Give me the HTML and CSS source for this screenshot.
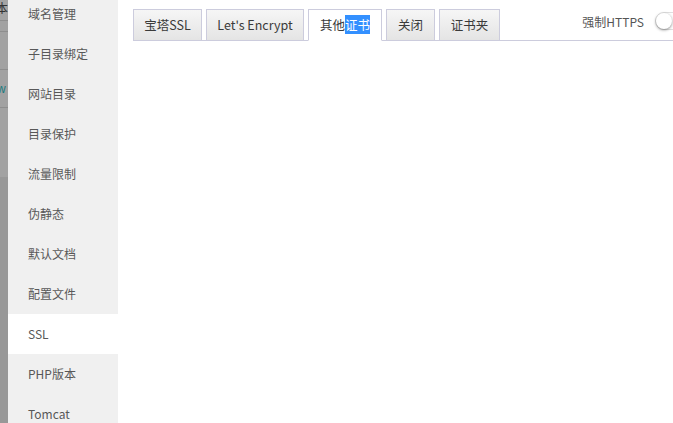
FILE: index.html
```html
<!DOCTYPE html>
<html>
<head>
<meta charset="utf-8">
<link rel="stylesheet" href="styles.css">
</head>
<body>
<div class="page">
  <div class="backdrop">
    <div class="bd-row bd-r1"><span class="bd-txt">本</span></div>
    <div class="bd-row bd-r2"></div>
    <div class="bd-row bd-r3"></div>
    <div class="bd-row bd-r4"><span class="bd-w">w</span></div>
    <div class="bd-row bd-r5"></div>
    <div class="bd-rest"></div>
  </div>
  <div class="sidebar">
    <div class="nav-item">域名管理</div>
    <div class="nav-item">子目录绑定</div>
    <div class="nav-item">网站目录</div>
    <div class="nav-item">目录保护</div>
    <div class="nav-item">流量限制</div>
    <div class="nav-item">伪静态</div>
    <div class="nav-item">默认文档</div>
    <div class="nav-item">配置文件</div>
    <div class="nav-item active">SSL</div>
    <div class="nav-item">PHP版本</div>
    <div class="nav-item">Tomcat</div>
  </div>
  <div class="main">
    <div class="tabbar">
      <div class="tab t1">宝塔SSL</div>
      <div class="tab t2">Let's Encrypt</div>
      <div class="tab t3 on">其他<span class="sel">证书</span></div>
      <div class="tab t4">关闭</div>
      <div class="tab t5">证书夹</div>
      <div class="force">
        <span class="force-label">强制HTTPS</span>
        <span class="switch"><span class="knob"></span></span>
      </div>
    </div>
  </div>
</div>
</body>
</html>
```
FILE: styles.css
```css
html, body {
  margin: 0;
  padding: 0;
  background: #fff;
  overflow: hidden;
}
.page {
  display: flex;
  width: 673px;
  height: 423px;
  font-family: "Noto Sans CJK SC", "Noto Sans", sans-serif;
  font-size: 12px;
  overflow: hidden;
}
.backdrop {
  width: 8px;
  flex: none;
  display: flex;
  flex-direction: column;
  background: #999;
  overflow: hidden;
}
.bd-row {
  background: #a2a2a2;
  border-bottom: 1px solid #8e8e8e;
  position: relative;
  overflow: hidden;
}
.bd-r1 { height: 20px; background: #a4a4a4; }
.bd-r2 { height: 10px; }
.bd-r3 { height: 37px; }
.bd-r4 { height: 37px; }
.bd-r5 { height: 69px; border-bottom: none; }
.bd-rest { flex: 1; background: #989898; }
.bd-txt {
  position: absolute;
  left: -4px;
  top: 0;
  font-size: 12px;
  line-height: 16px;
  color: #333;
}
.bd-w {
  position: absolute;
  left: -3px;
  top: 12px;
  font-size: 12px;
  line-height: 14px;
  color: #1b7c80;
  font-family: "Liberation Sans", sans-serif;
}
.sidebar {
  width: 110px;
  flex: none;
  background: #f0f0f0;
  margin-top: -6px;
  display: flex;
  flex-direction: column;
}
.nav-item {
  height: 40px;
  line-height: 40px;
  padding-left: 20px;
  color: #585858;
  font-size: 12px;
  flex: none;
}
.nav-item.active {
  background: #fff;
}
.main {
  flex: 1;
  padding: 9px 0 0 15px;
}
.tabbar {
  display: flex;
  align-items: flex-end;
  height: 31px;
  border-bottom: 1px solid #ccd;
}
.tab {
  height: 30px;
  line-height: 30px;
  margin-right: 4px;
  margin-bottom: -1px;
  border: 1px solid #ccd;
  border-bottom: 1px solid #ccd;
  background: linear-gradient(#f6f6f6, #e4e4e4);
  color: #3a3a3a;
  font-size: 12.5px;
  text-align: center;
  box-sizing: content-box;
}
.t1 { width: 67px; }
.t2 { width: 96px; }
.t3 { width: 72px; }
.t4 { width: 47px; }
.t5 { width: 59px; }
.tab.on {
  background: #fff;
  border-bottom-color: #fff;
}
.sel {
  background: #3390ff;
  color: #fff;
}
.force {
  margin-left: auto;
  align-self: flex-start;
  display: flex;
  align-items: center;
  height: 24px;
  margin-right: -34px;
}
.force-label {
  color: #555;
  font-size: 12px;
  margin-right: 11px;
}
.switch {
  width: 50px;
  height: 16px;
  border: 1px solid #dfdfdf;
  border-radius: 10px;
  background: #fff;
  position: relative;
}
.knob {
  position: absolute;
  left: 0;
  top: 0;
  width: 16px;
  height: 16px;
  border-radius: 50%;
  background: #fff;
  box-shadow: 0 1px 3px rgba(0,0,0,0.45);
}
```
